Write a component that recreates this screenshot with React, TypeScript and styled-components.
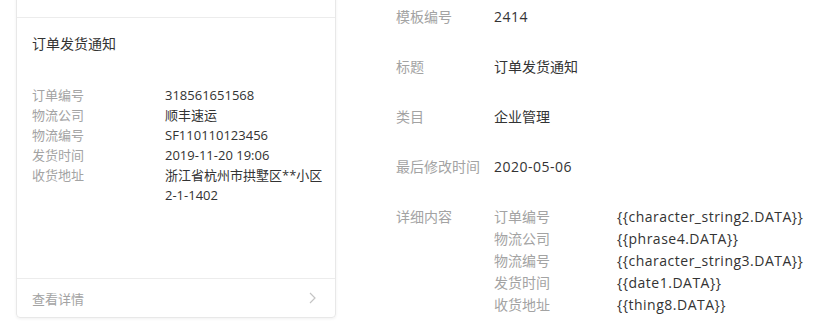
import React from "react";
import styled, { createGlobalStyle } from "styled-components";

const GlobalStyle = createGlobalStyle`
  html, body {
    margin: 0;
    padding: 0;
    background: #fff;
  }
  body {
    font-family: "Open Sans", "Noto Sans CJK SC", sans-serif;
    color: #333;
    overflow: hidden;
  }
`;

const Page = styled.div`
  display: flex;
  align-items: flex-start;
  gap: 60px;
  padding-left: 16px;
  width: 828px;
  height: 333px;
  box-sizing: border-box;
`;

const Card = styled.div`
  width: 320px;
  margin-top: -20px;
  border: 1px solid #e8e8e8;
  border-radius: 4px;
  box-shadow: 0 1px 3px rgba(0, 0, 0, 0.06);
  box-sizing: border-box;
  display: flex;
  flex-direction: column;
`;

const CardHead = styled.div`
  height: 36px;
  border-bottom: 1px solid #ececec;
`;

const CardBody = styled.div`
  height: 260px;
  padding: 16px 15px 0;
  box-sizing: border-box;
`;

const CardTitle = styled.div`
  font-size: 14px;
  line-height: 20px;
  color: #333;
  margin-bottom: 31px;
`;

const InfoRow = styled.div`
  display: grid;
  grid-template-columns: 133px 158px;
  font-size: 13px;
  line-height: 20px;
`;

const InfoLabel = styled.div`
  color: #a3a3a3;
`;

const InfoValue = styled.div`
  color: #333;
  word-break: break-all;
`;

const CardFoot = styled.div`
  height: 38px;
  border-top: 1px solid #ececec;
  display: flex;
  align-items: center;
  justify-content: space-between;
  padding: 0 15px;
  font-size: 13px;
  color: #a3a3a3;
`;

const Chevron = styled.svg`
  width: 7px;
  height: 12px;
  margin-right: 4px;
`;

const Detail = styled.div`
  padding-top: 6px;
  display: flex;
  flex-direction: column;
  gap: 28px;
`;

const Field = styled.div`
  display: flex;
  font-size: 14px;
  line-height: 22px;
`;

const FieldLabel = styled.div`
  width: 98px;
  color: #a3a3a3;
  flex-shrink: 0;
`;

const FieldValue = styled.div<{ $latin?: boolean }>`
  color: #333;
  letter-spacing: ${(p) => (p.$latin ? "0.5px" : "0")};
`;

const SubTable = styled.div`
  display: grid;
  grid-template-columns: 123px auto;
`;

const SubLabel = styled.div`
  color: #a3a3a3;
`;

const cardRows: [string, string][] = [
  ["订单编号", "318561651568"],
  ["物流公司", "顺丰速运"],
  ["物流编号", "SF110110123456"],
  ["发货时间", "2019-11-20 19:06"],
  ["收货地址", "浙江省杭州市拱墅区**小区2-1-1402"],
];

const subRows: [string, string][] = [
  ["订单编号", "{{character_string2.DATA}}"],
  ["物流公司", "{{phrase4.DATA}}"],
  ["物流编号", "{{character_string3.DATA}}"],
  ["发货时间", "{{date1.DATA}}"],
  ["收货地址", "{{thing8.DATA}}"],
];

export default function App() {
  return (
    <>
      <GlobalStyle />
      <Page>
        <Card>
          <CardHead />
          <CardBody>
            <CardTitle>订单发货通知</CardTitle>
            {cardRows.map(([k, v]) => (
              <InfoRow key={k}>
                <InfoLabel>{k}</InfoLabel>
                <InfoValue>{v}</InfoValue>
              </InfoRow>
            ))}
          </CardBody>
          <CardFoot>
            <span>查看详情</span>
            <Chevron viewBox="0 0 7 12">
              <path d="M1 1l5 5-5 5" fill="none" stroke="#c4c4c4" strokeWidth="1.2" />
            </Chevron>
          </CardFoot>
        </Card>
        <Detail>
          <Field>
            <FieldLabel>模板编号</FieldLabel>
            <FieldValue $latin>2414</FieldValue>
          </Field>
          <Field>
            <FieldLabel>标题</FieldLabel>
            <FieldValue>订单发货通知</FieldValue>
          </Field>
          <Field>
            <FieldLabel>类目</FieldLabel>
            <FieldValue>企业管理</FieldValue>
          </Field>
          <Field>
            <FieldLabel>最后修改时间</FieldLabel>
            <FieldValue $latin>2020-05-06</FieldValue>
          </Field>
          <Field>
            <FieldLabel>详细内容</FieldLabel>
            <SubTable>
              {subRows.map(([k, v]) => (
                <React.Fragment key={k}>
                  <SubLabel>{k}</SubLabel>
                  <FieldValue $latin>{v}</FieldValue>
                </React.Fragment>
              ))}
            </SubTable>
          </Field>
        </Detail>
      </Page>
    </>
  );
}
